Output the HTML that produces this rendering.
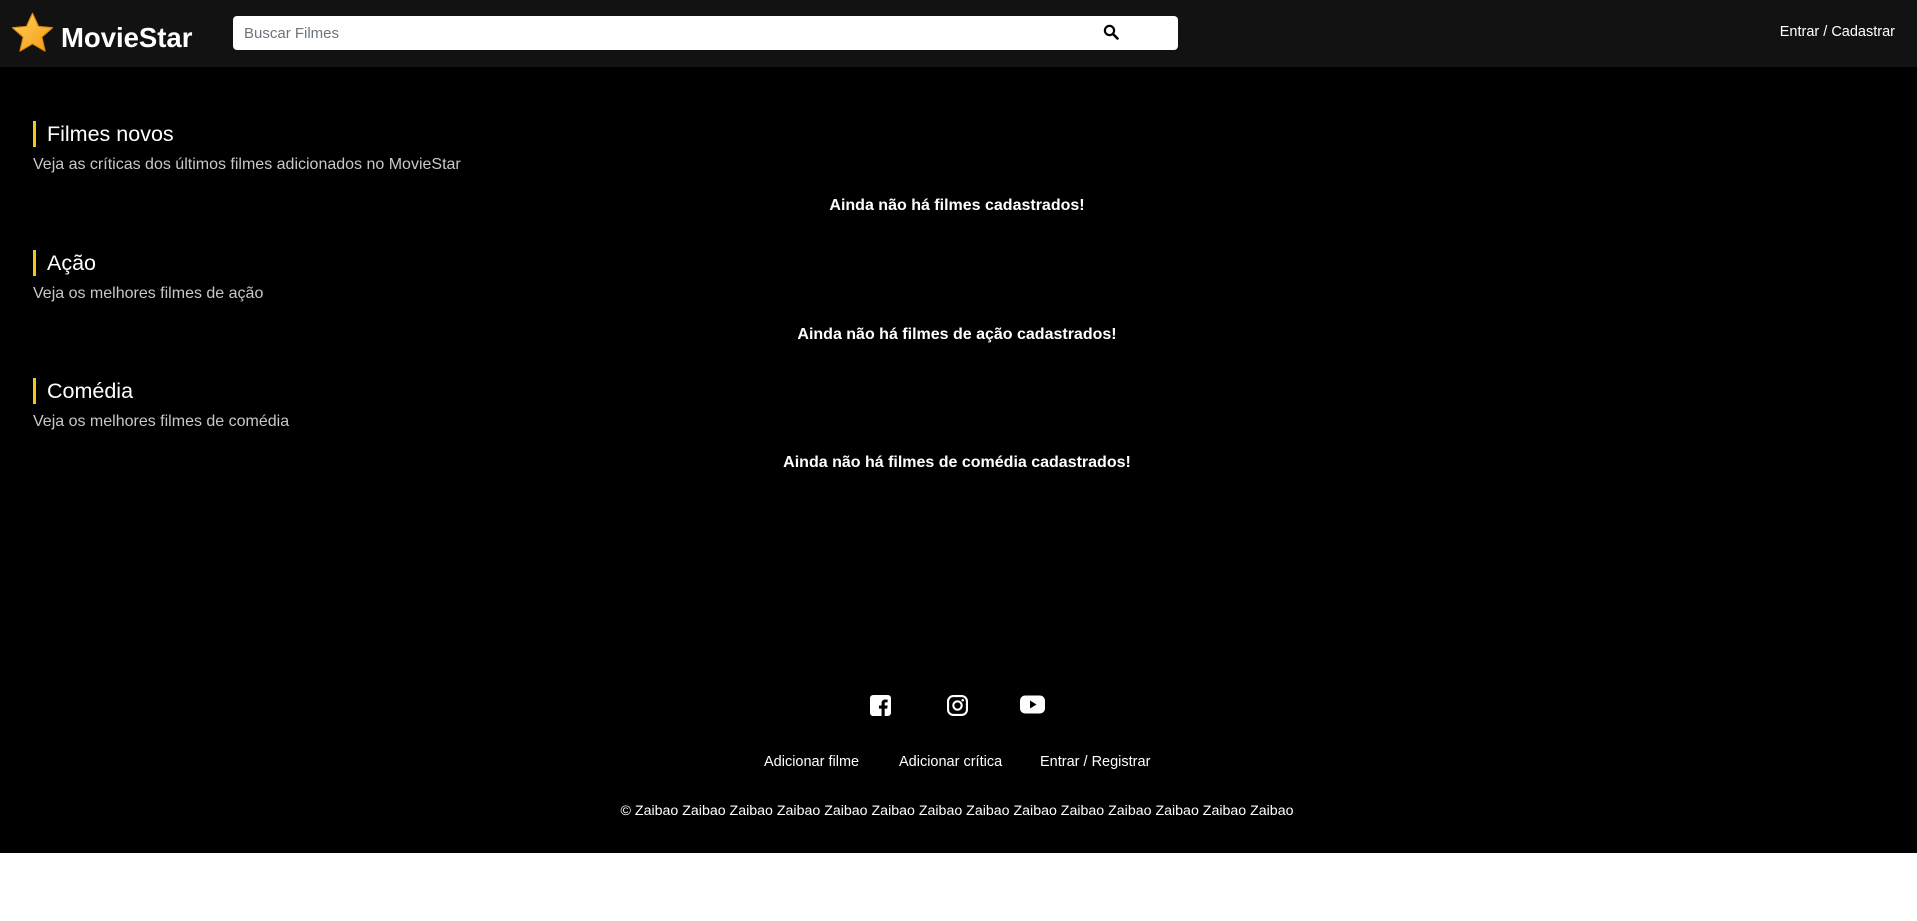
<!DOCTYPE html>
<html><head><meta charset="utf-8"><style>
*{margin:0;padding:0;box-sizing:border-box}
body{width:1917px;height:921px;background:#fff;font-family:"Liberation Sans",sans-serif;overflow:hidden}
.main{background:#000;height:853px;position:relative;color:#fff}
header{height:67px;background:#121212;position:relative}
.logo{position:absolute;left:10px;top:11px;display:flex;align-items:center}
.logo span{font-weight:bold;font-size:27.5px;margin-left:6px;margin-top:8px}
.search{position:absolute;left:233px;top:16px;width:945px;height:34px;background:#fff;border-radius:4px}
.search span{position:absolute;left:11px;top:9px;font-size:15px;color:#6c757d}
.search svg{position:absolute;left:870px;top:8px}
.login{position:absolute;right:22px;top:24px;font-size:14.5px}
.sec{position:absolute;left:33px}
.sec h2{font-weight:normal;font-size:21.5px;border-left:3px solid #f5c518;padding-left:11px;line-height:26px}
.sec p{font-size:16px;color:#c8c8c8;margin-top:9px}
.msg{position:absolute;left:0;width:1914px;text-align:center;font-weight:bold;font-size:16px}
.icons svg{position:absolute;top:695px}
.links{position:absolute;top:754px;font-size:14.5px}
.copy{position:absolute;top:803px;width:1914px;text-align:center;font-size:14.2px}
</style></head><body><div class="main">
<header>
<div class="logo"><svg width="45" height="45" viewBox="0 0 24 24"><defs><linearGradient id="g" x1="0" y1="0" x2="1" y2="1"><stop offset="0" stop-color="#ffd25a"/><stop offset="1" stop-color="#f59a12"/></linearGradient></defs><path d="M12 1.2l3.2 7 7.5.7-5.7 5 1.7 7.5L12 17.5 5.3 21.4 7 13.9 1.3 8.9l7.5-.7z" fill="url(#g)" stroke="#e08a10" stroke-width=".6" stroke-linejoin="round"/></svg><span>MovieStar</span></div>
<div class="search"><span>Buscar Filmes</span><svg width="16" height="16" viewBox="0 0 16 16"><circle cx="6.5" cy="6.5" r="4.6" fill="none" stroke="#000" stroke-width="2.2"/><path d="M10 10l4.5 4.5" stroke="#000" stroke-width="2.6" stroke-linecap="round"/></svg></div>
<div class="login">Entrar / Cadastrar</div>
</header>
<div class="sec" style="top:121px"><h2>Filmes novos</h2><p>Veja as críticas dos últimos filmes adicionados no MovieStar</p></div>
<div class="msg" style="top:197px">Ainda não há filmes cadastrados!</div>
<div class="sec" style="top:250px"><h2>Ação</h2><p>Veja os melhores filmes de ação</p></div>
<div class="msg" style="top:326px">Ainda não há filmes de ação cadastrados!</div>
<div class="sec" style="top:378px"><h2>Comédia</h2><p>Veja os melhores filmes de comédia</p></div>
<div class="msg" style="top:454px">Ainda não há filmes de comédia cadastrados!</div>
<div class="icons">
<svg style="left:870px" width="21" height="21" viewBox="0 0 20 20"><rect x="0" y="0" width="20" height="20" rx="3" fill="#fff"/><path d="M11 20v-7h-2.5v-3H11V8c0-2.5 1.5-3.7 3.7-3.7 1 0 1.9.1 2.1.1v2.5h-1.4c-1.1 0-1.4.6-1.4 1.4V10h2.8l-.4 3H14v7z" fill="#000"/></svg>
<svg style="left:947px" width="21" height="21" viewBox="0 0 20 20"><rect x="1" y="1" width="18" height="18" rx="5" fill="none" stroke="#fff" stroke-width="2"/><circle cx="10" cy="10" r="4" fill="none" stroke="#fff" stroke-width="2"/><circle cx="15" cy="5" r="1.2" fill="#fff"/></svg>
<svg style="left:1020px" width="25" height="19" viewBox="0 0 25 18"><rect x="0" y="0" width="25" height="18" rx="5" fill="#fff"/><path d="M10 5v8l6.5-4z" fill="#000"/></svg>
</div>
<div class="links" style="left:764px">Adicionar filme</div>
<div class="links" style="left:899px">Adicionar crítica</div>
<div class="links" style="left:1040px">Entrar / Registrar</div>
<div class="copy">© Zaibao Zaibao Zaibao Zaibao Zaibao Zaibao Zaibao Zaibao Zaibao Zaibao Zaibao Zaibao Zaibao Zaibao</div>
</div></body></html>
